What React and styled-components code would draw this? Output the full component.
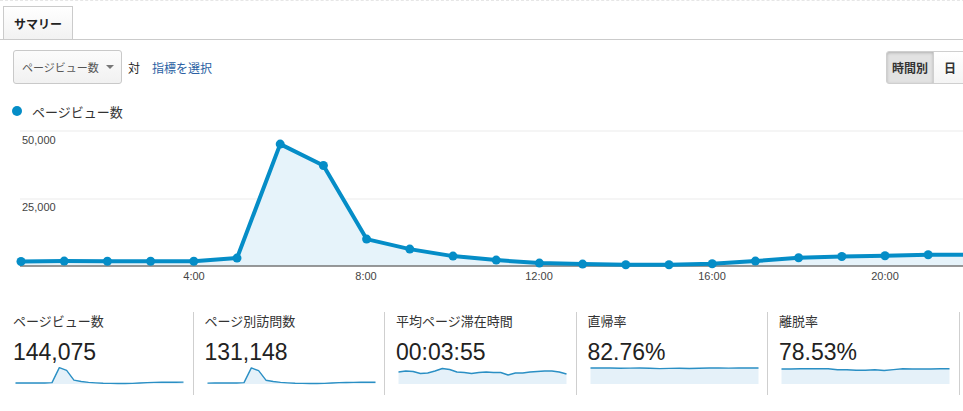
import styled, { createGlobalStyle } from "styled-components";

const GlobalStyle = createGlobalStyle`
  html, body {
    margin: 0;
    padding: 0;
    background: #fff;
    overflow: hidden;
  }
  body {
    font-family: "Liberation Sans", "Noto Sans CJK JP", sans-serif;
    color: #333;
  }
`;

const BLUE = "#058dc7";

const Page = styled.div`
  width: 990px;
`;

const TabBar = styled.div`
  display: flex;
  padding: 5px 0 0 3px;
  border-top: 1px dashed #e6e6e6;
  border-bottom: 1px solid #cbcbcb;
`;

const Tab = styled.div`
  display: flex;
  align-items: center;
  height: 33px;
  box-sizing: border-box;
  padding: 0 10px;
  border: 1px solid #cbcbcb;
  border-bottom: none;
  background: linear-gradient(#ffffff, #f2f2f2);
  font-size: 12px;
  font-weight: 700;
  color: #222;
`;

const Toolbar = styled.div`
  display: flex;
  align-items: center;
  padding: 10px 23px 0 13px;
`;

const Dropdown = styled.div`
  display: flex;
  align-items: center;
  justify-content: space-between;
  width: 109px;
  height: 34px;
  box-sizing: border-box;
  padding: 0 7px 0 8px;
  border: 1px solid #c9c9c9;
  border-radius: 3px;
  background: linear-gradient(#fcfcfc, #f1f1f1);
  font-size: 11px;
  white-space: nowrap;
  color: #555;
`;

const Caret = styled.span`
  width: 0;
  height: 0;
  border-left: 4px solid transparent;
  border-right: 4px solid transparent;
  border-top: 4px solid #777;
`;

const Versus = styled.span`
  margin-left: 6px;
  font-size: 12px;
  color: #222;
`;

const MetricLink = styled.span`
  margin-left: 12px;
  font-size: 12px;
  color: #2b5fa3;
`;

const ButtonGroup = styled.div`
  display: flex;
  margin-left: auto;
`;

const Button = styled.div`
  display: flex;
  align-items: center;
  height: 33px;
  box-sizing: border-box;
  padding: 0 ${props => (props.wide ? "5px" : "10px")};
  border: 1px solid #cfcfcf;
  margin-left: -1px;
  font-size: 12px;
  font-weight: 700;
  white-space: nowrap;
  color: #333;
  background: ${props => (props.active ? "#e2e2e2" : "linear-gradient(#ffffff, #f4f4f4)")};
  box-shadow: ${props => (props.active ? "inset 0 1px 3px rgba(0,0,0,0.22)" : "none")};
  border-radius: ${props => (props.first ? "3px 0 0 3px" : "0")};
`;

const Legend = styled.div`
  display: flex;
  align-items: center;
  height: 20px;
  margin: 17px 0 0 12px;
  font-size: 13px;
  color: #333;
`;

const LegendDot = styled.span`
  width: 10px;
  height: 10px;
  border-radius: 50%;
  background: ${BLUE};
  margin-right: 10px;
`;

const ChartSvg = styled.svg`
  display: block;
  margin-top: 3px;
`;

const Metrics = styled.div`
  display: flex;
  margin-top: 22px;
  padding-left: 2px;
`;

const Metric = styled.div`
  flex: none;
  width: 191.5px;
  box-sizing: border-box;
  padding: 2px 0 10px 11px;
  border-right: 1px solid #cfcfcf;
`;

const MetricLabel = styled.div`
  font-size: 13px;
  line-height: 16px;
  color: #333;
`;

const MetricValue = styled.div`
  margin-top: 9px;
  font-size: 23px;
  line-height: 26px;
  color: #222;
`;

const SparkSvg = styled.svg`
  display: block;
  margin: 1px 0 0 2px;
`;

// pixel heights above the baseline for every hour
const hourly = [4, 4.4, 4.3, 4.3, 4.3, 7.4, 121.4, 100, 26.4, 16.4, 9.4, 5.4, 2.4, 1.4, 0.7, 0.7, 1.7, 4.4, 7.7, 9, 9.7, 10.7, 10.7, 11];

const TOP = 124;
const BASE = 265.5 - TOP;

function MainChart() {
  const pts = hourly.map((h, i) => [21 + i * 43.2, BASE - h]);
  const line = pts.map(p => p.join(",")).join(" ");
  const area = `21,${BASE} ${line} ${pts[pts.length - 1][0]},${BASE}`;
  const ticks = [
    ["4:00", 194],
    ["8:00", 366],
    ["12:00", 539],
    ["16:00", 712],
    ["20:00", 885],
  ];
  return (
    <ChartSvg width="990" height="166">
      <line x1="20" x2="990" y1={131 - TOP} y2={131 - TOP} stroke="#ebebeb" />
      <line x1="20" x2="990" y1={199 - TOP} y2={199 - TOP} stroke="#ebebeb" />
      <polygon points={area} fill="#e6f3fa" />
      <line x1="20" x2="990" y1={BASE + 0.5} y2={BASE + 0.5} stroke="#333" />
      <text x="22" y={144 - TOP} fontSize="11" fill="#444">50,000</text>
      <text x="22" y={211 - TOP} fontSize="11" fill="#444">25,000</text>
      <polyline points={line} fill="none" stroke={BLUE} strokeWidth="4" strokeLinejoin="round" />
      {pts.map((p, i) => (
        <circle key={i} cx={p[0]} cy={p[1]} r="4.5" fill={BLUE} />
      ))}
      {ticks.map(([t, x]) => (
        <text key={t} x={x} y={280 - TOP} fontSize="11" fill="#444" textAnchor="middle">
          {t}
        </text>
      ))}
    </ChartSvg>
  );
}

function Sparkline({ ys }) {
  const step = 168 / (ys.length - 1);
  const pts = ys.map((y, i) => [0.5 + i * step, y]);
  const line = pts.map(p => p.join(",")).join(" ");
  const area = `0.5,18 ${line} 168.5,18`;
  return (
    <SparkSvg width="169" height="19">
      <polygon points={area} fill="#e5f1f9" />
      <polyline points={line} fill="none" stroke="#2a8fc4" strokeWidth="1.4" strokeLinejoin="round" />
    </SparkSvg>
  );
}

const peakSpark = hourly.map(h => 17.6 - h * (16 / 121.4));
const peakSpark2 = hourly.map(h => 17.6 - h * (16 / 121.4) * 0.98);

const metrics = [
  { label: "ページビュー数", value: "144,075", ys: peakSpark },
  { label: "ページ別訪問数", value: "131,148", ys: peakSpark2 },
  {
    label: "平均ページ滞在時間",
    value: "00:03:55",
    ys: [6, 5, 5.5, 7.5, 7, 5, 2.5, 3.5, 6, 6.5, 7.5, 6.5, 6, 6.5, 6.5, 9, 7, 7, 6, 5.5, 5, 5, 6, 8],
  },
  {
    label: "直帰率",
    value: "82.76%",
    ys: [2, 2, 2, 2.2, 2.1, 2, 2.3, 2.6, 2.4, 2.2, 2.5, 2.2, 2, 2, 2.1, 2, 2, 2],
  },
  {
    label: "離脱率",
    value: "78.53%",
    ys: [3, 3, 2.8, 2.8, 2.6, 2.8, 3.8, 3.8, 4.2, 4.2, 3.8, 4.5, 3.6, 2.8, 3, 3, 3, 2.8, 2.8],
  },
];

export default function App() {
  return (
    <Page>
      <GlobalStyle />
      <TabBar>
        <Tab>サマリー</Tab>
      </TabBar>
      <Toolbar>
        <Dropdown>
          ページビュー数
          <Caret />
        </Dropdown>
        <Versus>対</Versus>
        <MetricLink>指標を選択</MetricLink>
        <ButtonGroup>
          <Button first active wide>時間別</Button>
          <Button>日</Button>
        </ButtonGroup>
      </Toolbar>
      <Legend>
        <LegendDot />
        ページビュー数
      </Legend>
      <MainChart />
      <Metrics>
        {metrics.map(m => (
          <Metric key={m.label}>
            <MetricLabel>{m.label}</MetricLabel>
            <MetricValue>{m.value}</MetricValue>
            <Sparkline ys={m.ys} />
          </Metric>
        ))}
      </Metrics>
    </Page>
  );
}
